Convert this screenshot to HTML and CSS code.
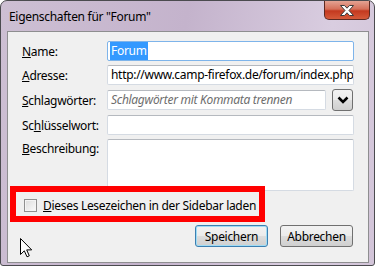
FILE: index.html
```html
<!DOCTYPE html>
<html>
<head>
    <meta charset="utf-8">
    <link rel="stylesheet" href="styles.css">
</head>
<body>
    <div class="window">
        <div class="titlebar">
            <span class="title">Eigenschaften für "Forum"</span>
            <div class="close">
                <svg width="16" height="11" viewBox="0 0 16 11">
                    <path d="M1.5 0.5 H5.5 L8 3.2 L10.5 0.5 H14.5 L10 5.5 L14.5 10.5 H10.5 L8 7.8 L5.5 10.5 H1.5 L6 5.5 Z" fill="#fff" stroke="#3a3a3a" stroke-width="1"/>
                </svg>
            </div>
        </div>

        <div class="client">
            <div class="form">
                <label class="label"><u>N</u>ame:</label>
                <div class="field focused"><span class="selected">Forum</span></div>

                <label class="label"><u>A</u>dresse:</label>
                <div class="field">http://www.camp-firefox.de/forum/index.php</div>

                <label class="label"><u>S</u>chlagwörter:</label>
                <div class="tag-row">
                    <div class="field placeholder">Schlagwörter mit Kommata trennen</div>
                    <button class="drop">
                        <svg width="12" height="8" viewBox="0 0 12 8">
                            <path d="M1.5 1.5 L6 6 L10.5 1.5" fill="none" stroke="#000" stroke-width="2.6"/>
                        </svg>
                    </button>
                </div>

                <label class="label">Sc<u>h</u>lüsselwort:</label>
                <div class="field"></div>

                <label class="label top"><u>B</u>eschreibung:</label>
                <div class="field area"></div>
            </div>

            <div class="sidebar-row">
                <span class="checkbox"></span>
                <span><u>D</u>ieses Lesezeichen in der Sidebar laden</span>
                <div class="highlight"></div>
            </div>

            <div class="buttons">
                <button class="btn default">Speichern</button>
                <button class="btn">Abbrechen</button>
            </div>

            <svg class="cursor" width="13" height="20" viewBox="0 0 13 20">
                <path d="M0.5 0.5 V16.5 L4.3 12.8 L7 18.8 L9.3 17.8 L6.7 11.9 H11.7 Z" fill="#fff" stroke="#000" stroke-width="1"/>
            </svg>
        </div>
    </div>
</body>
</html>
```

FILE: styles.css
```css
body {
    margin: 0;
    background: #ffffff;
    font-family: "Noto Sans", "Open Sans", sans-serif;
    font-size: 12px;
    letter-spacing: -0.3px;
    color: #000;
}

.window {
    width: 375px;
    height: 266px;
    box-sizing: border-box;
    border: 1px solid #4b4b4f;
    border-radius: 7px 7px 3px 3px;
    background: linear-gradient(100deg, #cdbfd3 0%, #c4b3cc 45%, #d9cde0 80%, #d2c4d8 100%);
    padding: 0 5px 0 6px;
}

.titlebar {
    height: 30px;
    display: flex;
    align-items: flex-start;
    justify-content: space-between;
}

.title {
    margin-top: 7px;
    margin-left: 2px;
    font-size: 12px;
    color: #000;
}

.close {
    width: 46px;
    height: 19px;
    margin-right: -1px;
    box-sizing: border-box;
    border: 1px solid #5c2a22;
    border-top: none;
    border-radius: 0 0 5px 5px;
    background: linear-gradient(#e4a393 0%, #d5705a 45%, #c4391f 55%, #d55a3a 100%);
    display: flex;
    align-items: center;
    justify-content: center;
}

.client {
    position: relative;
    height: 232px;
    box-sizing: border-box;
    border: 1px solid #8e8e90;
    background: #f0f0f0;
}

.form {
    display: grid;
    grid-template-columns: 85px 1fr;
    row-gap: 4px;
    padding: 9px 14px 0 14px;
}

.label {
    align-self: center;
    white-space: nowrap;
}

.label.top {
    align-self: start;
    padding-top: 1px;
}

.field {
    height: 20px;
    box-sizing: border-box;
    border: 1px solid #d5dbe3;
    border-top-color: #b5b9bf;
    border-radius: 2px;
    background: #fff;
    padding: 0 3px;
    line-height: 18px;
    white-space: nowrap;
    overflow: hidden;
}

.field.focused {
    border-color: #7eb4ea;
    padding-left: 2px;
}

.selected {
    background: #3399ff;
    color: #fff;
    padding: 1px 1px;
}

.field.placeholder {
    flex: 1;
    font-style: italic;
    color: #6d6d6d;
}

.field.area {
    height: 52px;
}

.tag-row {
    display: flex;
    align-items: center;
    gap: 6px;
}

.drop {
    width: 21px;
    height: 22px;
    margin-right: 1px;
    padding: 0;
    box-sizing: border-box;
    border: 1px solid #707070;
    border-radius: 3px;
    background: linear-gradient(#f2f2f2 0%, #ebebeb 50%, #dddddd 51%, #cfcfcf 100%);
    display: flex;
    align-items: center;
    justify-content: center;
}

.sidebar-row {
    position: relative;
    display: flex;
    align-items: center;
    gap: 6px;
    height: 18px;
    margin-top: 5px;
    padding-left: 16px;
}

.checkbox {
    width: 13px;
    height: 13px;
    box-sizing: border-box;
    border: 1px solid #8f8f8f;
    background: linear-gradient(135deg, #dcdcdc, #fbfbfb);
    box-shadow: inset 0 0 0 1px #f4f4f4;
}

.highlight {
    position: absolute;
    left: 2px;
    top: -10px;
    width: 255px;
    height: 36px;
    box-sizing: border-box;
    border: 6px solid #ff0000;
}

.buttons {
    display: flex;
    justify-content: flex-end;
    gap: 12px;
    margin-top: 11px;
    padding-right: 15px;
}

.btn {
    width: 73px;
    height: 22px;
    box-sizing: border-box;
    border: 1px solid #707070;
    border-radius: 3px;
    background: linear-gradient(#f2f2f2 0%, #ebebeb 50%, #dddddd 51%, #cfcfcf 100%);
    font-family: "Noto Sans", "Open Sans", sans-serif;
    font-size: 12px;
    letter-spacing: -0.3px;
    color: #000;
    padding: 0;
}

.btn.default {
    border-color: #3c7fb1;
    box-shadow: inset 0 0 0 1px #9fdcf5;
}

.cursor {
    position: absolute;
    left: 12px;
    top: 206px;
}
```
